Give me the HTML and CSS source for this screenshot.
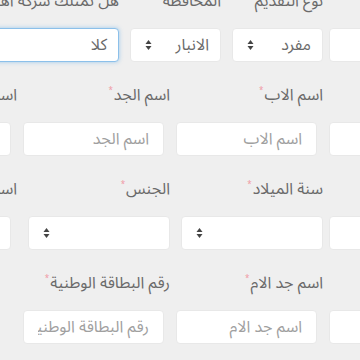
FILE: index.html
```html
<!DOCTYPE html>
<html lang="ar" dir="rtl">
  <head>
    <meta charset="UTF-8" />
    <meta name="viewport" content="width=device-width, initial-scale=1.0" />
    <title>استمارة التقديم</title>
    <link rel="stylesheet" href="styles.css">
  </head>
  <body>
    <div class="page">
      <form class="form">
        <div class="row">
          <div class="field col3">
            <label class="label">رقم هاتف المتقدم</label>
            <input class="input" type="text" placeholder="">
          </div>
          <div class="field col2">
            <label class="label">نوع التقديم</label>
            <div class="select"><span>مفرد</span><svg class="arrows" width="7" height="10" viewBox="0 0 7 10"><path d="M3.5 0L6.5 4H0.5Z M0.5 6H6.5L3.5 10Z"/></svg></div>
          </div>
          <div class="field col2">
            <label class="label">المحافظة</label>
            <div class="select"><span>الانبار</span><svg class="arrows" width="7" height="10" viewBox="0 0 7 10"><path d="M3.5 0L6.5 4H0.5Z M0.5 6H6.5L3.5 10Z"/></svg></div>
          </div>
          <div class="field col3">
            <label class="label">هل تمتلك شركة اهلية مسجلة</label>
            <div class="select focus"><span>كلا</span><svg class="arrows" width="7" height="10" viewBox="0 0 7 10"><path d="M3.5 0L6.5 4H0.5Z M0.5 6H6.5L3.5 10Z"/></svg></div>
          </div>
        </div>

        <div class="row">
          <div class="field col3">
            <label class="label">الاسم الاول<span class="req">*</span></label>
            <input class="input" type="text" placeholder="الاسم الاول">
          </div>
          <div class="field col3">
            <label class="label">اسم الاب<span class="req">*</span></label>
            <input class="input" type="text" placeholder="اسم الاب">
          </div>
          <div class="field col3">
            <label class="label">اسم الجد<span class="req">*</span></label>
            <input class="input" type="text" placeholder="اسم الجد">
          </div>
          <div class="field col3">
            <label class="label">اسم اللقب<span class="req">*</span></label>
            <input class="input" type="text" placeholder="اسم اللقب">
          </div>
        </div>

        <div class="row">
          <div class="field col3">
            <label class="label">محل الولادة<span class="req">*</span></label>
            <input class="input" type="text" placeholder="">
          </div>
          <div class="field col3">
            <label class="label">سنة الميلاد<span class="req">*</span></label>
            <div class="select"><span></span><svg class="arrows" width="7" height="10" viewBox="0 0 7 10"><path d="M3.5 0L6.5 4H0.5Z M0.5 6H6.5L3.5 10Z"/></svg></div>
          </div>
          <div class="field col3">
            <label class="label">الجنس<span class="req">*</span></label>
            <div class="select"><span></span><svg class="arrows" width="7" height="10" viewBox="0 0 7 10"><path d="M3.5 0L6.5 4H0.5Z M0.5 6H6.5L3.5 10Z"/></svg></div>
          </div>
          <div class="field col3">
            <label class="label">اسم الام<span class="req">*</span></label>
            <input class="input" type="text" placeholder="اسم الام">
          </div>
        </div>

        <div class="row">
          <div class="field col3">
            <label class="label">اسم اب الام<span class="req">*</span></label>
            <input class="input" type="text" placeholder="">
          </div>
          <div class="field col3">
            <label class="label">اسم جد الام<span class="req">*</span></label>
            <input class="input" type="text" placeholder="اسم جد الام">
          </div>
          <div class="field col3">
            <label class="label">رقم البطاقة الوطنية<span class="req">*</span></label>
            <input class="input" type="text" placeholder="رقم البطاقة الوطنية">
          </div>
        </div>
      </form>
    </div>
  </body>
</html>
```

FILE: styles.css
```css
* {
  margin: 0;
  padding: 0;
  box-sizing: border-box;
}
html,
body {
  width: 360px;
  height: 360px;
  overflow: hidden;
  background-color: #efefef;
}
body {
  font-family: "Noto Sans Arabic", "Noto Kufi Arabic", "DejaVu Sans", sans-serif;
  font-size: 16px;
  color: #555;
}
.page {
  width: 360px;
  height: 360px;
  overflow: hidden;
}
.form {
  direction: rtl;
  width: 601px;
  margin-right: -116px;
  margin-top: -9px;
}
.row {
  display: grid;
  grid-template-columns: repeat(12, 1fr);
  column-gap: 11px;
  margin-bottom: 23px;
}
.col2 {
  grid-column: span 2;
}
.col3 {
  grid-column: span 3;
}
.field {
  display: flex;
  flex-direction: column;
}
.label {
  display: block;
  height: 20px;
  line-height: 20px;
  margin-bottom: 17px;
  white-space: nowrap;
  color: #6a6a6a;
  font-size: 16px;
}
.req {
  color: #ef9aa4;
  font-size: 8px;
  vertical-align: top;
  line-height: 12px;
  margin-right: 1px;
}
.input {
  display: block;
  height: 34px;
  margin: 0 6px 0 -5px;
  padding: 0 14px;
  border: 1px solid #e8e8e8;
  border-radius: 4px;
  background-color: #fff;
  font-family: inherit;
  font-size: 16px;
  color: #555;
  text-align: right;
  outline: none;
}
.input::placeholder {
  color: #a0a0a0;
}
.select {
  display: flex;
  align-items: center;
  justify-content: space-between;
  height: 34px;
  padding: 0 11px 0 14px;
  border: 1px solid #e8e8e8;
  border-radius: 4px;
  background-color: #fff;
  color: #6a6a6a;
  font-size: 16px;
}
.select.focus {
  border-color: #8cc0ea;
  box-shadow: 0 0 4px rgba(102, 175, 233, 0.6);
}
.arrows {
  fill: #444;
}
```
